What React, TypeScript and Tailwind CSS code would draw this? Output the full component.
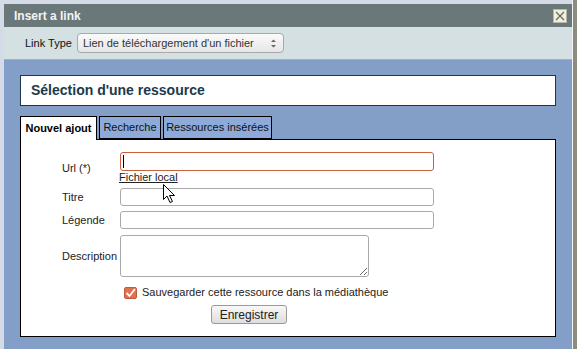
import { useState } from 'react';

const font = { fontFamily: '"Liberation Sans", Arial, sans-serif' };

function CheckIcon() {
  return (
    <span className="w-[13px] h-[12px] rounded-[2px] bg-[#e0714f] border border-[#c4583a] flex items-center justify-center">
      <svg width="11" height="10" viewBox="0 0 11 10">
        <path d="M1.5 5 L4.5 8 L10 1" fill="none" stroke="#fff" strokeWidth="1.8" />
      </svg>
    </span>
  );
}

function Cursor() {
  return (
    <svg className="absolute left-[163px] top-[184px]" width="13" height="20" viewBox="0 0 13 20">
      <path d="M0.5 0.5 L0.5 15.5 L4 12 L7 18.5 L9.5 17.5 L6.5 11.5 L11.5 11.5 Z" fill="#fff" stroke="#000" strokeWidth="1" />
    </svg>
  );
}

const tabs = [
  { label: 'Nouvel ajout', w: 'w-[77px]' },
  { label: 'Recherche', w: 'w-[62px]' },
  { label: 'Ressources insérées', w: 'w-[109px]' },
];

export default function App() {
  const [save, setSave] = useState(true);

  return (
    <div className="w-[577px] h-[349px] overflow-hidden flex bg-[#d4dbe6] relative" style={font}>
      <div className="flex flex-col w-[572px] pt-[4px] pl-[4px]">
        {/* Title bar */}
        <div className="h-[23px] bg-[#6b7879] flex items-center justify-between pl-[10px] pr-[5px]">
          <span className="text-[12px] font-bold text-[#f2f4f4]">Insert a link</span>
          <span className="w-[14px] h-[14px] bg-[#f1f0de] border border-[#b8b8a8] flex items-center justify-center">
            <svg width="10" height="10" viewBox="0 0 10 10">
              <path d="M1 1 L9 9 M9 1 L1 9" stroke="#6b6b60" strokeWidth="1.3" />
            </svg>
          </span>
        </div>

        {/* Link type */}
        <div className="h-[33px] bg-[#d4e0e1] border-b border-[#9fb2cc] flex items-center pl-[21px] gap-[5px]">
          <span className="text-[11px] text-[#111]">Link Type</span>
          <div className="w-[207px] h-[20px] rounded-[4px] border border-[#a9a9a9] bg-gradient-to-b from-[#fbfbfb] to-[#e6e6e6] flex items-center justify-between pl-[5px] pr-[6px]">
            <span className="text-[11px] text-[#333]">Lien de téléchargement d'un fichier</span>
            <svg width="7" height="11" viewBox="0 0 7 11">
              <path d="M1 4 L3.5 1.5 L6 4 Z M1 7 L3.5 9.5 L6 7 Z" fill="#666" />
            </svg>
          </div>
        </div>

        {/* Blue area */}
        <div className="flex-1 bg-[#849fc7] px-[16px] pt-[15px]">
          <div className="h-[31px] bg-white border border-[#17394a] flex items-center pl-[10px]">
            <span className="text-[14px] font-bold text-[#1b3a4b]">Sélection d'une ressource</span>
          </div>

          <div className="flex gap-[2px] mt-[10px] h-[23px]">
            {tabs.map((t, i) => (
              <div
                key={t.label}
                className={
                  i === 0
                    ? `${t.w} bg-white border border-b-0 border-black flex items-center justify-center text-[11px] font-bold text-black h-[24px] relative z-10`
                    : `${t.w} bg-[#8eaad8] border border-black flex items-center justify-center text-[11px] text-[#111]`
                }
              >
                {t.label}
              </div>
            ))}
          </div>

          <div className="h-[198px] bg-white border border-black pt-[12px] pl-[41px] text-[11px] text-[#222]">
            <div className="flex items-center">
              <span className="w-[58px]">Url (*)</span>
              <div className="flex flex-col items-start">
                <div className="w-[314px] h-[19px] rounded-[3px] border border-[#c8613c] flex items-center pl-[2px]">
                  <span className="w-px h-[13px] bg-black" />
                </div>
                <span className="underline leading-[13px] -ml-[1px]">Fichier local</span>
              </div>
            </div>
            <div className="flex items-center mt-[4px]">
              <span className="w-[58px]">Titre</span>
              <div className="w-[314px] h-[18px] rounded-[3px] border border-[#aaa]" />
            </div>
            <div className="flex items-center mt-[5px]">
              <span className="w-[58px]">Légende</span>
              <div className="w-[314px] h-[18px] rounded-[3px] border border-[#aaa]" />
            </div>
            <div className="flex items-center mt-[6px]">
              <span className="w-[58px]">Description</span>
              <textarea className="w-[249px] h-[42px] rounded-[3px] border border-[#aaa] block outline-none" />
            </div>

            <label className="flex items-center gap-[5px] mt-[9px] ml-[62px] leading-[13px]">
              <input type="checkbox" className="hidden" checked={save} onChange={() => setSave(!save)} />
              <CheckIcon />
              Sauvegarder cette ressource dans la médiathèque
            </label>

            <div className="ml-[149px] mt-[6px]">
              <button className="w-[76px] h-[19px] rounded-[3px] border border-[#999] bg-gradient-to-b from-[#f8f8f8] to-[#dedede] text-[12px] text-[#222] flex items-center justify-center">
                Enregistrer
              </button>
            </div>
          </div>
        </div>
      </div>

      <div className="w-[5px] bg-[#8d8c80] border-l border-[#f4f4f4]" />
      <Cursor />
    </div>
  );
}
